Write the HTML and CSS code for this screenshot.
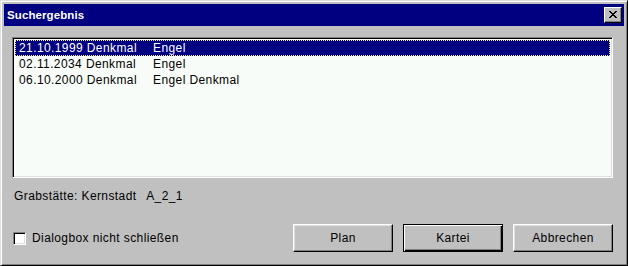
FILE: index.html
```html
<!DOCTYPE html>
<html lang="de">

<head>
    <meta charset="UTF-8">
    <title>Suchergebnis</title>
    <link rel="stylesheet" href="styles.css">
</head>

<body>

    <div class="dialog">

        <!-- Titelleiste -->
        <div class="titel">
            <span class="titel-text">Suchergebnis</span>
            <button class="btn-schliessen" aria-label="Schließen">
                <svg width="10" height="9" viewBox="0 0 10 9">
                    <path d="M1 0h2v1h1v1h2v-1h1v-1h2v1h-1v1h-1v1h-1v1h1v1h1v1h1v1h-2v-1h-1v-1h-2v1h-1v1h-2v-1h1v-1h1v-1h1v-1h-1v-1h-1v-1h-1z" fill="#000"/>
                </svg>
            </button>
        </div>

        <div class="inhalt">

            <!-- Ergebnisliste -->
            <div class="liste">
                <div class="zeile aktiv"><span class="col1">21.10.1999 Denkmal</span><span>Engel</span></div>
                <div class="zeile"><span class="col1">02.11.2034 Denkmal</span><span>Engel</span></div>
                <div class="zeile"><span class="col1">06.10.2000 Denkmal</span><span>Engel Denkmal</span></div>
            </div>

            <p class="info">Grabstätte: Kernstadt <span class="ort">A_2_1</span></p>

            <div class="fuss">
                <label class="check">
                    <span class="checkbox"></span>
                    Dialogbox nicht schließen
                </label>
                <div class="buttons">
                    <button class="btn">Plan</button>
                    <button class="btn standard">Kartei</button>
                    <button class="btn">Abbrechen</button>
                </div>
            </div>

        </div>
    </div>

</body>

</html>
```

FILE: styles.css
```css
* {
    box-sizing: border-box;
}

body {
    margin: 0;
    font-family: "Liberation Sans", Arial, sans-serif;
    font-size: 12px;
    letter-spacing: 0.4px;
    color: #000;
    background-color: #c0c0c0;
}

.dialog {
    width: 628px;
    height: 266px;
    background-color: #c0c0c0;
    border: 1px solid;
    border-color: #dfdfdf #000 #000 #dfdfdf;
    box-shadow: inset 1px 1px #fff, inset -1px -1px #808080;
    padding: 3px;
    display: flex;
    flex-direction: column;
}

.titel {
    height: 22px;
    background-color: #000080;
    color: #fff;
    display: flex;
    align-items: center;
    justify-content: space-between;
    padding: 0 2px 0 3px;
}

.titel-text {
    font-weight: bold;
    font-size: 11.5px;
    letter-spacing: 0.1px;
}

.btn-schliessen {
    width: 18px;
    height: 16px;
    padding: 0;
    background-color: #c0c0c0;
    border: 1px solid;
    border-color: #fff #000 #000 #fff;
    box-shadow: inset -1px -1px #808080;
    display: flex;
    align-items: center;
    justify-content: center;
}

.inhalt {
    flex: 1;
    padding: 11px 11px 0 8px;
    display: flex;
    flex-direction: column;
}

.liste {
    height: 141px;
    background-color: #f8fcf8;
    border: 1px solid;
    border-color: #808080 #fff #fff #808080;
    box-shadow: inset 1px 1px #000, inset -1px -1px #dfdfdf;
    padding: 2px;
}

.zeile {
    height: 16px;
    display: flex;
    align-items: center;
    padding-left: 3px;
    border: 1px solid transparent;
}

.zeile.aktiv {
    background-color: #000080;
    color: #fff;
    border: 1px dotted #f0e890;
}

.col1 {
    width: 134px;
}

.info {
    margin: 11px 0 0 2px;
}

.info .ort {
    margin-left: 6px;
}

.fuss {
    margin-top: 21px;
    display: flex;
    align-items: center;
    justify-content: space-between;
}

.check {
    display: flex;
    align-items: center;
    gap: 6px;
    margin-left: 1px;
}

.checkbox {
    width: 13px;
    height: 13px;
    background-color: #fff;
    border: 1px solid;
    border-color: #808080 #fff #fff #808080;
    box-shadow: inset 1px 1px #000, inset -1px -1px #dfdfdf;
}

.buttons {
    display: flex;
    gap: 10px;
}

.btn {
    width: 100px;
    height: 28px;
    font-family: inherit;
    font-size: 12px;
    letter-spacing: 0.4px;
    background-color: #c0c0c0;
    border: 1px solid;
    border-color: #fff #000 #000 #fff;
    box-shadow: inset -1px -1px #808080, inset 1px 1px #dfdfdf;
    padding: 0;
    color: #000;
}

.btn.standard {
    border: 1px solid #000;
    box-shadow: inset 1px 1px #fff, inset -1px -1px #000, inset -2px -2px #808080;
}
```
